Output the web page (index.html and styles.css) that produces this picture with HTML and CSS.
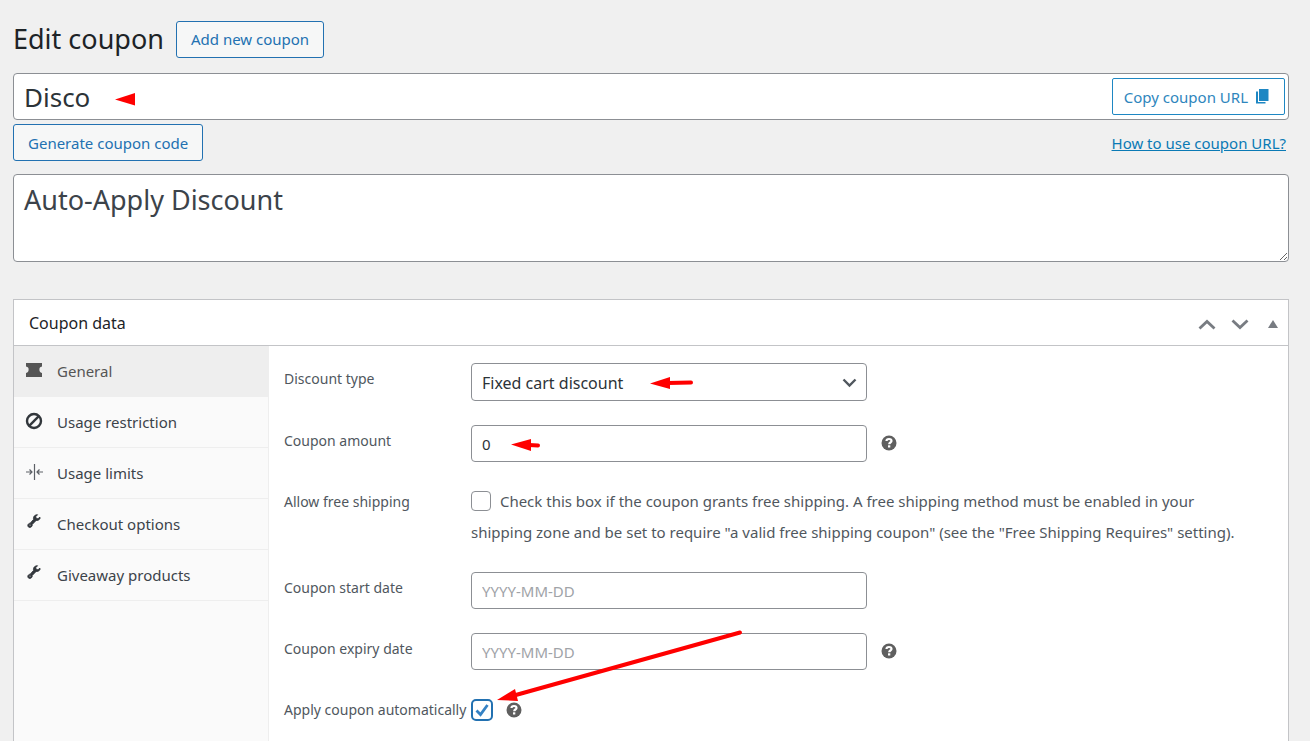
FILE: index.html
```html
<!DOCTYPE html>
<html lang="en">
<head>
  <meta charset="UTF-8">
  <meta name="viewport" content="width=device-width, initial-scale=1.0">
  <title>Edit coupon</title>
  <link rel="stylesheet" href="styles.css">
</head>
<body>

<svg class="sprite" aria-hidden="true">
  <symbol id="help" viewBox="0 0 16 16">
    <circle cx="8" cy="8" r="7.5" fill="#5f5f5f"/>
    <path d="M5.500 6.100C5.500 4.700 6.600 4 8 4c1.500 0 2.500.7 2.500 1.900 0 1.600-2.300 1.600-2.300 3.300" fill="none" stroke="#fff" stroke-width="2.200"/>
    <rect x="7" y="10.300" width="2.300" height="2.200" fill="#fff"/>
  </symbol>
  <symbol id="wrench" viewBox="-1 1 20 20">
    <path d="M15.600 6.200c-1 1.500-2.600 2.200-4.200 1.900L7 12.600c.2 1-.1 2-.9 2.700-1 .9-2.600.9-3.400 0s-.8-2.400.2-3.300c.5-.5 1.200-.8 1.900-.8L8.500 7c-.4-1.500.1-3.200 1.300-4.200.9-.8 2-1.100 3.100-1L11 3.900l.4 2 2.100.5 1.900-2c.4.600.4 1.200.2 1.800zM5.300 14.100a1 1 0 1 0-1.500-1.300 1 1 0 0 0 1.500 1.300z" fill="#32373c" stroke="#32373c" stroke-width="1" fill-rule="evenodd"/>
  </symbol>
</svg>

<main class="wrap">
  <div class="page-header">
    <h1>Edit coupon</h1>
    <button class="button" type="button">Add new coupon</button>
  </div>

  <div class="title-box">
    <input class="title-input" type="text" value="Disco" aria-label="Coupon code">
    <button class="button copy-button" type="button">
      Copy coupon URL
      <svg width="13" height="15" viewBox="0 0 13 15" aria-hidden="true">
        <path d="M3 0h9.500v12H3z" fill="#1e87c3"/>
        <path d="M0 2.500h2V13h7.500v1.500H0z" fill="#1e87c3"/>
      </svg>
    </button>
    <svg class="arrow arrow-title" width="20" height="13" viewBox="0 0 20 13" aria-hidden="true">
      <path d="M0 6.500 20 0v12.500z" fill="#f00"/>
    </svg>
  </div>

  <div class="title-actions">
    <button class="button" type="button">Generate coupon code</button>
    <a href="#">How to use coupon URL?</a>
  </div>

  <textarea class="description" aria-label="Description">Auto-Apply Discount</textarea>

  <section class="panel">
    <div class="panel-header">
      <h2>Coupon data</h2>
      <div class="panel-controls">
        <button type="button" aria-label="Move up">
          <svg width="18" height="11" viewBox="0 0 18 11"><path d="M1.500 9.500 9 2.500l7.500 7" fill="none" stroke="#787c82" stroke-width="2.800"/></svg>
        </button>
        <button type="button" aria-label="Move down">
          <svg width="18" height="11" viewBox="0 0 18 11"><path d="M1.500 1.500 9 8.500l7.500-7" fill="none" stroke="#787c82" stroke-width="2.800"/></svg>
        </button>
        <button type="button" aria-label="Toggle panel">
          <svg width="10" height="8" viewBox="0 0 10 8"><path d="M5 0l5 8H0z" fill="#787c82"/></svg>
        </button>
      </div>
    </div>

    <div class="panel-body">
      <nav class="tabs">
        <a class="tab active" href="#general">
          <svg width="18" height="18" viewBox="0 0 18 18"><path d="M1 2h16v3.500c-2 .5-2.600 1.400-2.600 3s.6 3 2.600 3.500V16H1v-4c2-.5 2.600-1.400 2.600-3.500S3 6 1 5.500z" fill="#555"/></svg>
          General
        </a>
        <a class="tab" href="#restriction">
          <svg width="18" height="18" viewBox="0 0 18 18"><g fill="none" stroke="#32373c" stroke-width="2.400"><circle cx="9" cy="9" r="7"/><path d="M4.200 13.800 13.800 4.200"/></g></svg>
          Usage restriction
        </a>
        <a class="tab" href="#limits">
          <svg width="18" height="18" viewBox="0 0 18 18"><path d="M9.500 1v16M1 9h6M4.500 6.500 7 9l-2.500 2.500M18 9h-6M14.500 6.500 12 9l2.500 2.500" fill="none" stroke="#5c6066" stroke-width="1.200"/></svg>
          Usage limits
        </a>
        <a class="tab" href="#checkout">
          <svg width="18" height="18"><use href="#wrench"/></svg>
          Checkout options
        </a>
        <a class="tab" href="#giveaway">
          <svg width="18" height="18"><use href="#wrench"/></svg>
          Giveaway products
        </a>
      </nav>

      <form class="fields">
        <div class="row">
          <label for="discount-type">Discount type</label>
          <div class="control">
            <select id="discount-type" class="field">
              <option>Fixed cart discount</option>
            </select>
            <svg class="chevron" width="15" height="10" viewBox="0 0 15 10" aria-hidden="true"><path d="M1.500 1.500l6 6 6-6" fill="none" stroke="#50575e" stroke-width="2.400"/></svg>
            <svg class="arrow arrow-type" width="44" height="14" viewBox="0 0 44 14" aria-hidden="true">
              <path d="M0 7.500 20 1v12z" fill="#f00"/>
              <path d="M18 7 41 6.500" stroke="#f00" stroke-width="4" stroke-linecap="round"/>
            </svg>
          </div>
        </div>
        <div class="row">
          <label for="amount">Coupon amount</label>
          <div class="control">
            <input id="amount" class="field" type="text" value="0">
            <svg class="help" role="img" aria-label="Help"><use href="#help"/></svg>
            <svg class="arrow arrow-amount" width="30" height="14" viewBox="0 0 30 14" aria-hidden="true">
              <path d="M0 6.500 20 1v12z" fill="#f00"/>
              <path d="M18 7 27 7.500" stroke="#f00" stroke-width="4" stroke-linecap="round"/>
            </svg>
          </div>
        </div>
        <div class="row">
          <label for="free-shipping">Allow free shipping</label>
          <p class="check-text">
            <input id="free-shipping" class="check" type="checkbox">
            Check this box if the coupon grants free shipping. A free shipping method must be enabled in your shipping zone and be set to require "a valid free shipping coupon" (see the "Free Shipping Requires" setting).
          </p>
        </div>
        <div class="row">
          <label for="start-date">Coupon start date</label>
          <div class="control">
            <input id="start-date" class="field" type="text" placeholder="YYYY-MM-DD">
          </div>
        </div>
        <div class="row">
          <label for="expiry-date">Coupon expiry date</label>
          <div class="control">
            <input id="expiry-date" class="field" type="text" placeholder="YYYY-MM-DD">
            <svg class="help" role="img" aria-label="Help"><use href="#help"/></svg>
          </div>
        </div>
        <div class="row">
          <label for="auto-apply">Apply coupon automatically</label>
          <div class="control control-check">
            <input id="auto-apply" class="check" type="checkbox" checked>
            <svg class="help" role="img" aria-label="Help"><use href="#help"/></svg>
            <svg class="arrow arrow-auto" width="250" height="76" viewBox="0 0 250 76" aria-hidden="true">
              <path d="M0 70 18 59l3 12z" fill="#f00"/>
              <path d="M17 65.500 243 2.500" stroke="#f00" stroke-width="4" stroke-linecap="round"/>
            </svg>
          </div>
        </div>
      </form>
    </div>
  </section>
</main>

</body>
</html>
```
FILE: styles.css
```css
* {
  box-sizing: border-box;
}

body {
  margin: 0;
  background: #f0f0f0;
  color: #3c434a;
  font-family: "Noto Sans", "Open Sans", sans-serif;
  font-size: 15px;
}

button,
input,
select,
textarea {
  font-family: inherit;
  font-size: 15px;
}

.sprite {
  position: absolute;
  width: 0;
  height: 0;
}

.wrap {
  display: flex;
  flex-direction: column;
  min-height: 100vh;
  padding: 20px 21px 0 13px;
}

.page-header {
  display: flex;
  align-items: center;
  gap: 12px;
  margin-bottom: 15px;
}

h1 {
  margin: 0;
  color: #1d2327;
  font-size: 27px;
  font-weight: 400;
  line-height: 38px;
}

.button {
  height: 37px;
  padding: 0 14px;
  border: 1px solid #2271b1;
  border-radius: 3px;
  background: #f6f7f7;
  color: #2271b1;
}

/* Title */
.title-box {
  position: relative;
  display: flex;
  align-items: center;
  height: 47px;
  padding-right: 3px;
  border: 1px solid #8c8f94;
  border-radius: 4px;
  background: #fff;
}

.title-input {
  flex: 1;
  min-width: 0;
  padding: 0 10px;
  border: 0;
  background: none;
  color: #2c3338;
  font-size: 26px;
  outline: none;
}

.copy-button {
  display: flex;
  align-items: center;
  gap: 8px;
  padding: 0 15px 0 11px;
  border-color: #1e87c3;
  border-radius: 2px;
  background: #fff;
  color: #2e86bd;
}

.title-actions {
  display: flex;
  justify-content: space-between;
  align-items: center;
  margin: 4px 0 13px;
  padding-right: 3px;
}

.title-actions a {
  color: #0a7ab5;
}

.description {
  display: block;
  width: 100%;
  height: 88px;
  padding: 6px 10px;
  border: 1px solid #8c8f94;
  border-radius: 4px;
  background: #fff;
  color: #3c434a;
  font-size: 27px;
  line-height: 38px;
  resize: vertical;
}

/* Coupon data panel */
.panel {
  flex: 1;
  display: flex;
  flex-direction: column;
  margin-top: 37px;
  border: 1px solid #c3c4c7;
  border-bottom: 0;
  background: #fff;
}

.panel-header {
  display: flex;
  justify-content: space-between;
  align-items: center;
  height: 46px;
  padding: 0 10px 0 15px;
  border-bottom: 1px solid #c3c4c7;
}

h2 {
  margin: 0;
  color: #1d2327;
  font-size: 16px;
  font-weight: 400;
}

.panel-controls {
  display: flex;
  align-items: center;
  gap: 15px;
  padding-top: 3px;
}

.panel-controls button {
  display: flex;
  padding: 0;
  border: 0;
  background: none;
}

.panel-controls button:last-child {
  margin-left: 4px;
}

.panel-body {
  flex: 1;
  display: flex;
}

.tabs {
  flex: none;
  width: 255px;
  border-right: 1px solid #eee;
  background: #fafafa;
}

.tab {
  display: flex;
  align-items: center;
  gap: 14px;
  height: 51px;
  padding-left: 11px;
  border-bottom: 1px solid #eee;
  color: #3c434a;
  text-decoration: none;
}

.tab svg {
  margin-bottom: 2px;
}

.tab.active {
  background: #eee;
  color: #555;
}

.fields {
  flex: 1;
  display: flex;
  flex-direction: column;
  gap: 24px;
  padding: 17px 36px 10px 15px;
}

.row {
  display: grid;
  grid-template-columns: 187px 1fr;
  color: #50575e;
}

.row > label {
  font-size: 14px;
  line-height: 31px;
  white-space: nowrap;
}

.control {
  position: relative;
  display: flex;
  align-items: center;
  gap: 14px;
}

.field {
  width: 396px;
  height: 37px;
  padding: 0 10px;
  border: 1px solid #8c8f94;
  border-radius: 4px;
  background: #fff;
  color: #2c3338;
}

select.field {
  height: 38px;
  padding-top: 2px;
  font-size: 16px;
  appearance: none;
}

.field::placeholder {
  color: #a0a3a8;
}

.help {
  width: 16px;
  height: 16px;
}

.field + .help {
  margin-bottom: 2px;
}

.check-text {
  margin: 0;
  line-height: 31px;
}

.check {
  appearance: none;
  width: 20px;
  height: 20px;
  margin: 0 5px 0 0;
  border: 1px solid #8c8f94;
  border-radius: 4px;
  background: #fff;
  vertical-align: -4px;
}

.control-check {
  height: 31px;
  gap: 8px;
}

.check:checked {
  width: 22px;
  height: 22px;
  border: 2px solid #2271b1;
  border-radius: 5px;
  background: url("data:image/svg+xml,%3Csvg xmlns='http://www.w3.org/2000/svg' viewBox='0 0 18 18'%3E%3Cpath d='M3.500 9.500 7.500 13.500 14.500 4' fill='none' stroke='%233582c4' stroke-width='2.800'/%3E%3C/svg%3E") center / 18px no-repeat;
}

/* Overlays */
.chevron {
  position: absolute;
  top: 15px;
  left: 371px;
  pointer-events: none;
}

.arrow {
  position: absolute;
  pointer-events: none;
}

.arrow-title {
  top: 19px;
  left: 101px;
}

.arrow-type {
  top: 13px;
  left: 179px;
}

.arrow-amount {
  top: 13px;
  left: 40px;
}

.arrow-auto {
  bottom: 19px;
  left: 26px;
}
```
